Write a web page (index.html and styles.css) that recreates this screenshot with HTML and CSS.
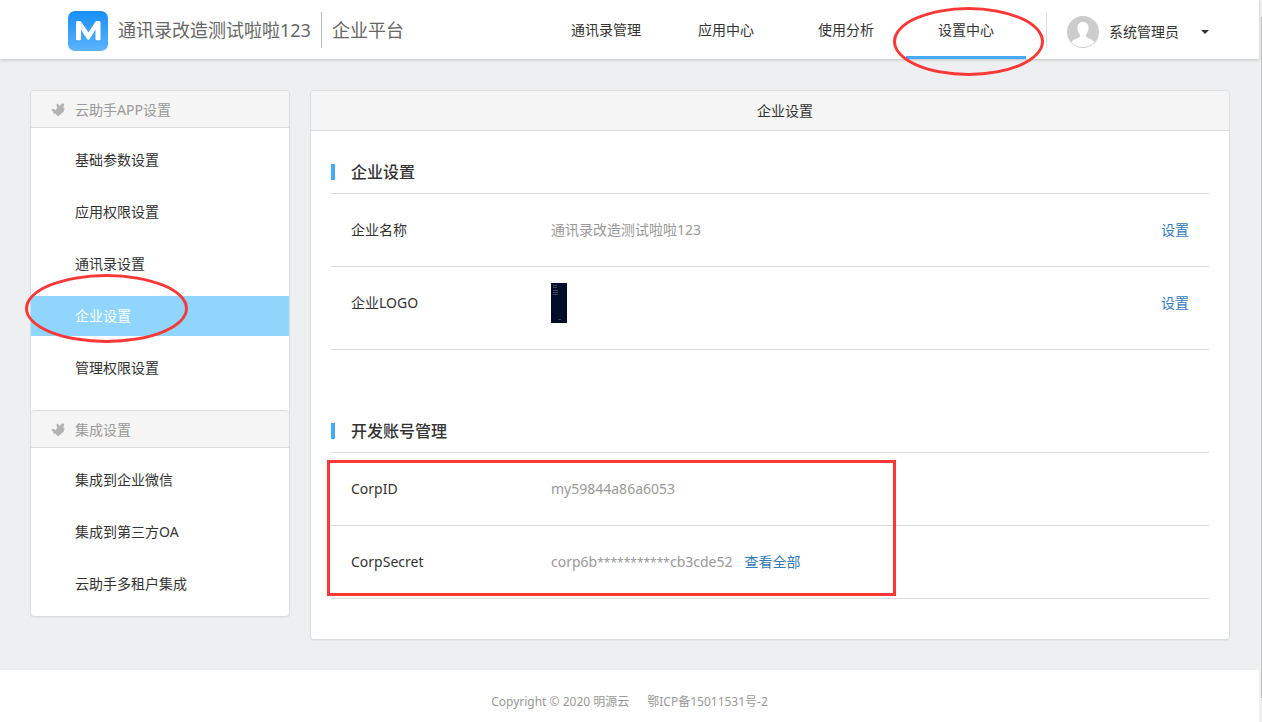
FILE: index.html
```
<!DOCTYPE html>
<html lang="zh-CN">
<head>
<meta charset="utf-8">
<title>企业设置</title>
<link rel="stylesheet" href="styles.css">
</head>
<body>
<svg class="defs" width="0" height="0" aria-hidden="true">
  <symbol id="plug" viewBox="0 0 14 14"><path fill="#b3b3b3" d="M0.300 7.300 1.800 5.800 4.400 7 6.400 5 5.200 1.800 6.800 0.600 8.200 2.800 9.600 2.200 10.600 0.400 13.200 0.600 13 2.800 11.600 4 13.600 5 13.200 6.800 12.400 9 7 13.600 4.400 10.800 2.400 10.400 2.200 8.600Z"/></symbol>
</svg>
<div class="page">
  <header class="topbar">
    <a class="brand" href="#">
      <svg class="brand-logo" viewBox="0 0 40 40" aria-hidden="true">
        <defs>
          <linearGradient id="tile" x1="0" y1="0" x2="0" y2="1"><stop offset="0" stop-color="#178ff5"/><stop offset="1" stop-color="#5db3fd"/></linearGradient>
          <linearGradient id="fold" x1="0" y1="0" x2="1" y2="0"><stop offset="0" stop-color="#dbe3ec"/><stop offset="1" stop-color="#fff"/></linearGradient>
        </defs>
        <rect width="40" height="40" rx="7" fill="url(#tile)"/>
        <path d="M8 11.500q0-1.500 1.500-1.500h2.200q1 0 1.600.9L20.500 21.500 27.200 10.900q.6-.9 1.600-.9h2.200q1.500 0 1.500 1.500V28q0 1.200-1.200 1.200h-2.600q-1.200 0-1.200-1.200V18.500l-5.600 9.300q-.5 1-1.500 1-1 0-1.500-1L13 18.500V28q0 1.200-1.200 1.200H9.200Q8 29.200 8 28Z" fill="#fff"/>
        <path d="M13 18.500V11l4 6v8Z" fill="url(#fold)"/>
      </svg>
      <span class="brand-name">通讯录改造测试啦啦123</span>
      <span class="brand-sub">企业平台</span>
    </a>
    <nav class="nav">
      <a href="#">通讯录管理</a>
      <a href="#">应用中心</a>
      <a href="#">使用分析</a>
      <a class="current" href="#">设置中心<span class="ring ring-nav"></span></a>
    </nav>
    <button class="user" type="button">
      <svg class="avatar" viewBox="0 0 32 32" aria-hidden="true">
        <circle cx="16" cy="16" r="16" fill="#ccc"/>
        <path fill="#fff" d="M16 6c3.600 0 5.600 2.400 5.600 6 0 3-1.200 5-2.400 6.600-.6 1.400-.2 2.400 1 3.200 3 1.200 5.600 2 7.200 4.400A15 15 0 0 1 16 31 15 15 0 0 1 4.600 26.200c1.600-2.400 4.200-3.200 7.200-4.400 1.200-.8 1.600-1.800 1-3.200C11.600 17 10.400 15 10.400 12c0-3.600 2-6 5.600-6Z"/>
      </svg>
      <span>系统管理员</span>
      <span class="caret"></span>
    </button>
  </header>

  <div class="layout">
    <aside class="card sidebar">
      <h2><svg class="plug"><use href="#plug"/></svg>云助手APP设置</h2>
      <ul>
        <li><a href="#">基础参数设置</a></li>
        <li><a href="#">应用权限设置</a></li>
        <li><a href="#">通讯录设置</a></li>
        <li><a class="current" href="#">企业设置<span class="ring ring-side"></span></a></li>
        <li><a href="#">管理权限设置</a></li>
      </ul>
      <h2><svg class="plug"><use href="#plug"/></svg>集成设置</h2>
      <ul>
        <li><a href="#">集成到企业微信</a></li>
        <li><a href="#">集成到第三方OA</a></li>
        <li><a href="#">云助手多租户集成</a></li>
      </ul>
    </aside>

    <main class="card content">
      <h1>企业设置</h1>
      <section>
        <h3>企业设置</h3>
        <div class="row"><span class="label">企业名称</span><span class="value">通讯录改造测试啦啦123</span><a href="#">设置</a></div>
        <div class="row row-logo"><span class="label">企业LOGO</span><span class="value"><svg class="thumb" viewBox="0 0 16 40" aria-hidden="true"><rect width="16" height="40" fill="#010d29"/><path d="M2 2.500h4M2 4.500h4M2 7.500h5M2 9.500h5M2 11.500h5" stroke="#3a4a5c"/><path d="M7 36.500h3" stroke="#33415a"/><path d="M0 33l3-2M13 34l3-1" stroke="#000614"/></svg></span><a href="#">设置</a></div>
      </section>
      <section>
        <h3>开发账号管理</h3>
        <div class="marked">
          <div class="row"><span class="label">CorpID</span><span class="value">my59844a86a6053</span></div>
          <div class="row"><span class="label">CorpSecret</span><span class="value">corp6b<span class="mask">***********</span>cb3cde52<a class="reveal" href="#">查看全部</a></span></div>
          <span class="box"></span>
        </div>
      </section>
    </main>
  </div>

  <footer class="footer"><span>Copyright © 2020 明源云</span><span>鄂ICP备15011531号-2</span></footer>
</div>
<div class="scroll"><div class="thumb-bar"></div></div>
</body>
</html>
```
FILE: styles.css
```
* { box-sizing: border-box; }
body {
  margin: 0;
  display: flex;
  min-height: 100vh;
  font: 14px/20px "Noto Sans", "Noto Sans CJK SC", sans-serif;
  color: #333;
  background: #fff;
}
h1, h2, h3, ul { margin: 0; padding: 0; font-size: 14px; font-weight: 400; list-style: none; }
a { color: #337ab7; text-decoration: none; }
.defs { position: absolute; }
.page { flex: 1; display: flex; flex-direction: column; min-width: 0; }

.topbar {
  position: relative;
  z-index: 1;
  display: flex;
  height: 59px;
  padding: 0 46px 0 68px;
  background: #fff;
  box-shadow: 0 1px 3px rgba(0, 0, 0, .2);
}
.brand { display: flex; align-items: center; gap: 10px; padding-top: 2px; font-size: 18px; color: #666; white-space: nowrap; }
.brand-logo { width: 40px; height: 40px; }
.brand-name, .brand-sub { line-height: 36px; margin-top: -2px; }
.brand-sub { padding-left: 10px; border-left: 1px solid #bbb; }
.nav { display: flex; margin-left: auto; }
.nav a { position: relative; width: 120px; border-bottom: 3px solid transparent; line-height: 60px; height: 59px; text-align: center; color: #333; }
.nav a.current { border-color: #45aaff; }
.user {
  display: flex;
  align-items: center;
  align-self: flex-start;
  width: 167px;
  height: 36px;
  margin: 12px 0 0 20px;
  padding: 4px 4px 0 20px;
  border: 0;
  border-left: 1px solid #ddd;
  background: none;
  font: inherit;
  color: #333;
}
.avatar { width: 32px; height: 32px; margin-right: 10px; }
.caret { margin-left: auto; border: 4px solid transparent; border-top-color: #333; border-bottom: 0; }

.layout {
  display: grid;
  grid-template-columns: 260px 1fr;
  gap: 20px;
  align-items: start;
  padding: 31px 29px 30px 30px;
  background: #edeff1;
}
.card { border: 1px solid #dadcdd; border-radius: 4px; background: #fff; box-shadow: 0 1px 1px rgba(0, 0, 0, .04); }
.sidebar h2 { display: flex; align-items: center; gap: 10px; height: 37px; padding: 1px 20px 0; border-bottom: 1px solid #dadcdd; border-radius: 4px 4px 0 0; background: #f5f5f5; color: #999; }
.sidebar ul { display: grid; gap: 12px; padding: 12px 0; }
.sidebar ul + h2 { height: 38px; margin-top: 10px; border-top: 1px solid #dadcdd; }
.sidebar li a { position: relative; display: block; padding-left: 44px; line-height: 40px; color: #333; }
.sidebar li a.current { background: #90d5fb; color: #fff; }
.plug { width: 14px; height: 14px; }

.content h1 { height: 40px; line-height: 40px; border-bottom: 1px solid #dadcdd; border-radius: 4px 4px 0 0; background: #f5f5f5; text-align: center; padding-left: 30px; }
.content section { padding: 0 20px 40px; }
.content h3 { display: flex; align-items: center; gap: 16px; padding: 29px 0 9px; border-bottom: 1px solid #dadcdd; font-size: 16px; line-height: 24px; font-weight: 500; }
.content h3::before { content: ""; width: 4px; height: 16px; background: #45aaff; }
.row { display: grid; grid-template-columns: 200px 1fr auto; align-items: center; height: 73px; padding: 0 20px; border-bottom: 1px solid #dadcdd; }
.row-logo { height: 83px; padding-bottom: 10px; }
.value { color: #999; }
.mask { font-size: 12px; }
.reveal { margin-left: 12px; }
.thumb { display: block; width: 16px; height: 40px; }

.marked { position: relative; }
.box { position: absolute; left: -4px; top: 7px; width: 569px; height: 136px; border: 3px solid #fb3838; }
.ring { position: absolute; border: 3px solid #fb3838; border-radius: 50%; pointer-events: none; }
.ring-nav { left: -13px; top: 7px; width: 151px; height: 69px; }
.ring-side { left: -6px; top: -22px; width: 163px; height: 69px; }

.footer { flex: 1; display: flex; justify-content: center; align-items: center; gap: 18px; padding-top: 12px; font-size: 12px; color: #999; }
.scroll { width: 3px; padding: 17px 0 24px 2px; display: flex; background: #f0f0f0; }
.thumb-bar { flex: 1; background: #c1c1c1; }
```
